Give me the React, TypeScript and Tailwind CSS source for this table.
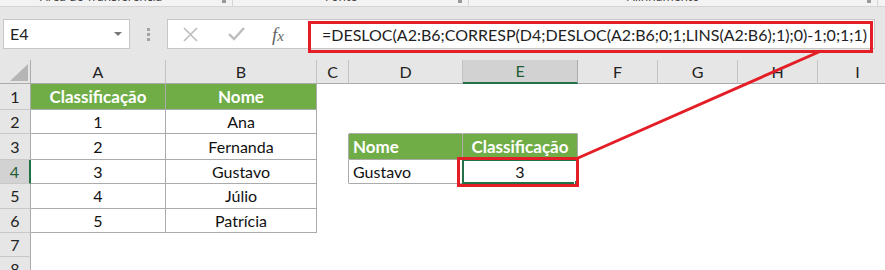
import clsx from "clsx";

const COLS = ["A", "B", "C", "D", "E", "F", "G", "H", "I"];

// rows 1..9 of the sheet with their values
const ROWS: Record<number, Record<string, string>> = {
  1: { A: "Classificação", B: "Nome" },
  2: { A: "1", B: "Ana" },
  3: { A: "2", B: "Fernanda", D: "Nome", E: "Classificação" },
  4: { A: "3", B: "Gustavo", D: "Gustavo", E: "3" },
  5: { A: "4", B: "Júlio" },
  6: { A: "5", B: "Patrícia" },
  7: {},
  8: {},
  9: {},
};

const isTable = (r: number, c: string) =>
  ((c === "A" || c === "B") && r >= 1 && r <= 6) ||
  ((c === "D" || c === "E") && (r === 3 || r === 4));

const isHead = (r: number, c: string) =>
  (r === 1 && (c === "A" || c === "B")) || (r === 3 && (c === "D" || c === "E"));

function Cell({ r, c }: { r: number; c: string }) {
  const value = ROWS[r][c];
  const table = isTable(r, c);
  const head = isHead(r, c);
  const edgeRight = c === "C" && (r === 3 || r === 4);
  const edgeBottom = (c === "D" || c === "E") && r === 2;
  const left = c === "D";

  return (
    <div
      className={clsx(
        "relative flex items-center border-r border-b whitespace-nowrap",
        left ? "justify-start pl-[4px]" : "justify-center",
        head ? "bg-[#70ad47] text-white font-bold text-[17px]" : "bg-white text-[#111] text-[16px]",
        table || edgeRight ? "border-r-[#ababab]" : "border-r-transparent",
        table || edgeBottom ? "border-b-[#ababab]" : "border-b-transparent"
      )}
    >
      {value}
      {r === 4 && c === "E" && (
        <>
          <div className="absolute -left-px -top-px -right-px -bottom-px border-2 border-[#217346]" />
          <div className="absolute right-[-4px] bottom-[-4px] w-[7px] h-[7px] bg-[#217346] border border-white" />
          <div className="absolute left-[-6px] top-[-3px] w-[122px] h-[30px] border-[3px] border-[#e41e26] z-10" />
        </>
      )}
    </div>
  );
}

function RibbonStrip() {
  const groups = [
    { label: "Área de Transferência", w: "w-[233px]", pad: "pl-[40px]" },
    { label: "Fonte", w: "w-[236px]", pad: "pl-[92px]" },
    { label: "Alinhamento", w: "w-[409px]", pad: "pl-[158px]" },
  ];
  return (
    <div className="flex h-[7px] bg-[#f3f3f3] border-b border-[#d5d5d5] overflow-hidden">
      {groups.map((g) => (
        <div key={g.label} className={clsx("relative flex shrink-0 border-r border-[#d5d5d5]", g.w, g.pad)}>
          <span className="mt-[-10px] text-[12px] leading-[14px] text-[#444] font-['Noto_Sans',sans-serif]">
            {g.label}
          </span>
          <span className="absolute right-[6px] top-0 w-[4px] h-[3px] bg-[#9a9a9a]" />
        </div>
      ))}
    </div>
  );
}

function FormulaBar() {
  return (
    <div className="flex items-start h-[53px] bg-[#e6e6e6] pt-[12px] pl-[3px]">
      <div className="flex items-center justify-between w-[127px] h-[30px] bg-white border border-[#c6c6c6] pl-[6px] pr-[7px]">
        <span className="text-[16px] text-[#222]">E4</span>
        <svg width="8" height="4" viewBox="0 0 8 4">
          <polygon points="0,0 8,0 4,4" fill="#777" />
        </svg>
      </div>
      <div className="flex flex-col items-center justify-center gap-[2px] w-[37px] h-[30px]">
        <span className="w-[3px] h-[3px] bg-[#a3a3a3]" />
        <span className="w-[3px] h-[3px] bg-[#a3a3a3]" />
        <span className="w-[3px] h-[3px] bg-[#a3a3a3]" />
      </div>
      <div className="relative flex items-center w-[708px] h-[30px] bg-white border border-[#c6c6c6]">
        <div className="flex items-center w-[141px] h-full pl-[15px]">
          <svg width="15" height="15" viewBox="0 0 15 15">
            <path d="M1 1 L14 14 M14 1 L1 14" stroke="#bdbdbd" strokeWidth="1.6" />
          </svg>
          <svg className="ml-[30px]" width="17" height="14" viewBox="0 0 17 14">
            <path d="M1 7 L6 12 L16 1" stroke="#bdbdbd" strokeWidth="2.4" fill="none" />
          </svg>
          <span className="ml-[27px] text-[19px] italic text-[#666] font-['Liberation_Serif',serif] leading-none">
            f<span className="text-[15px]">x</span>
          </span>
        </div>
        <span className="pl-[13px] pt-[2px] text-[16px] text-[#222] whitespace-nowrap">
          =DESLOC(A2:B6;CORRESP(D4;DESLOC(A2:B6;0;1;LINS(A2:B6);1);0)-1;0;1;1)
        </span>
        <div className="absolute left-[140px] top-[1px] w-[565px] h-[32px] border-[3px] border-[#e41e26] z-10" />
      </div>
    </div>
  );
}

export default function App() {
  const rowNums = [1, 2, 3, 4, 5, 6, 7, 8, 9];
  return (
    <div className="relative w-[885px] h-[270px] overflow-hidden bg-white font-['Lato',sans-serif]">
      <RibbonStrip />
      <FormulaBar />
      <div className="grid grid-cols-[31px_135px_151px_32px_114px_115px_80px_80px_80px_80px] grid-rows-[24px_26px_24px_26px_24px_25px_24px_24px_24px_24px]">
        {/* corner */}
        <div className="relative bg-[#e6e6e6] border-r border-b border-[#ababab]">
          <svg className="absolute right-[2px] bottom-[2px]" width="18" height="17" viewBox="0 0 18 17">
            <polygon points="18,0 18,17 0,17" fill="#b5b5b5" />
          </svg>
        </div>
        {COLS.map((c) => (
          <div
            key={c}
            className={clsx(
              "flex items-center justify-center text-[16px] border-r",
              c === "E"
                ? "bg-[#d2d2d2] text-[#1e5e37] border-b-2 border-b-[#217346] border-r-[#ababab]"
                : "bg-[#e6e6e6] text-[#222] border-b border-b-[#ababab] border-r-[#c3c3c3]"
            )}
          >
            {c}
          </div>
        ))}
        {rowNums.map((r) => (
          <div key={r} className="contents">
            <div
              className={clsx(
                "flex items-center justify-center text-[16px] border-b border-b-[#c8c8c8]",
                r === 4
                  ? "bg-[#d2d2d2] text-[#1e5e37] border-r-2 border-r-[#217346]"
                  : "bg-[#e6e6e6] text-[#222] border-r border-r-[#ababab]"
              )}
            >
              {r}
            </div>
            {COLS.map((c) => (
              <Cell key={c} r={r} c={c} />
            ))}
          </div>
        ))}
      </div>
      <svg className="absolute left-0 top-0 pointer-events-none z-20" width="885" height="270">
        <line x1="578" y1="158" x2="821" y2="51" stroke="#e41e26" strokeWidth="3" />
      </svg>
    </div>
  );
}
